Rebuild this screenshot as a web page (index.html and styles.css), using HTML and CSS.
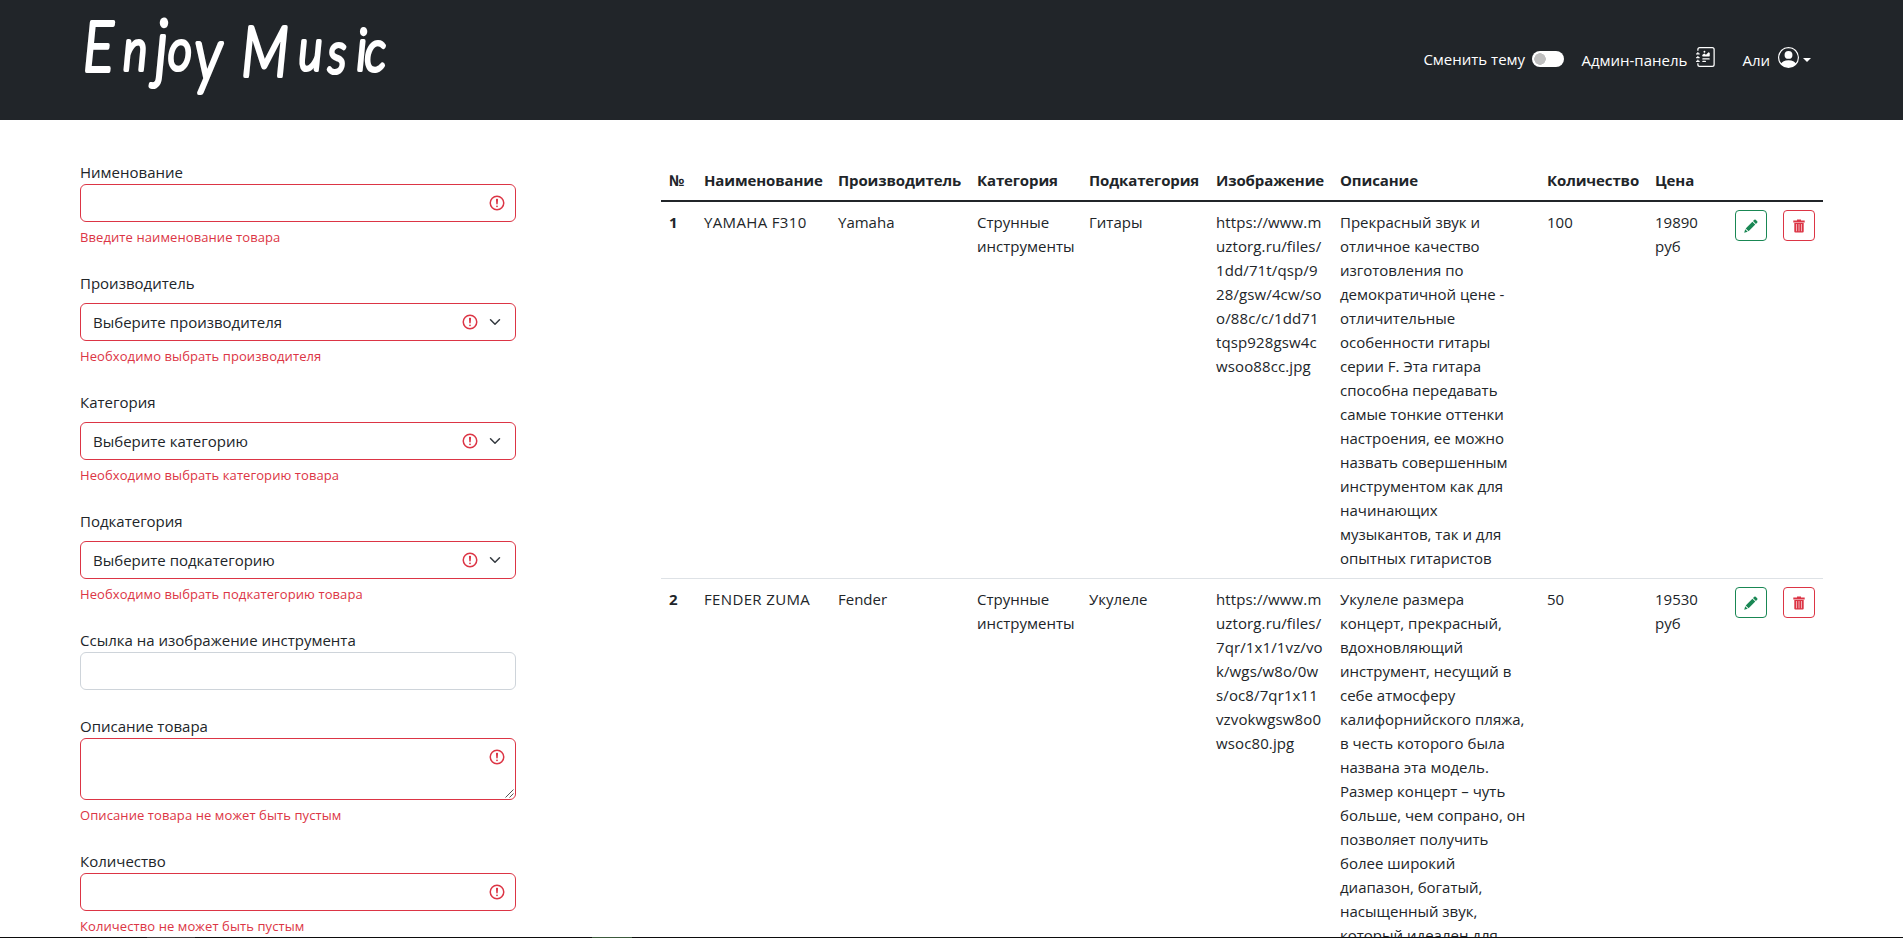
FILE: index.html
```html
<!DOCTYPE html>
<html lang="ru">
<head>
<meta charset="utf-8">
<title>Enjoy Music</title>
<link rel="stylesheet" href="styles.css">
</head>
<body>
<svg class="defs" width="0" height="0" aria-hidden="true">
  <symbol id="warn" viewBox="0 0 12 12"><circle cx="6" cy="6" r="4.5" fill="none" stroke="#dc3545"/><path d="M5.8 3.6h.4L6 6.5z" fill="none" stroke="#dc3545" stroke-linejoin="round"/><circle cx="6" cy="8.2" r=".6" fill="#dc3545"/></symbol>
  <symbol id="chev" viewBox="0 0 16 16"><path d="m2 5 6 6 6-6" fill="none" stroke="#343a40" stroke-width="2" stroke-linecap="round" stroke-linejoin="round"/></symbol>
  <symbol id="pencil" viewBox="0 0 14 14"><path d="M10.300.8a1 1 0 0 1 1.400 0l1.500 1.500a1 1 0 0 1 0 1.400l-1.300 1.300-2.900-2.900zM8.400 2.700l2.900 2.900-6.700 6.700-2.900-2.900zM1.200 10.300l2.500 2.500L.2 13.800z"/></symbol>
  <symbol id="trash" viewBox="0 0 14 14"><path fill-rule="evenodd" d="M5 .5h4v1h3.700v2H1.300v-2H5zM2.300 4h9.400v8.500a1 1 0 0 1-1 1H3.300a1 1 0 0 1-1-1zM4.300 5v7.300h.6V5zm2.400 0v7.300h.6V5zm2.400 0v7.300h.6V5z"/></symbol>
</svg>

<header class="navbar">
  <svg class="logo" width="320" height="110" viewBox="0 0 320 110">
    <text transform="scale(.8 1)"><tspan class="cap" x="4" y="71">E</tspan><tspan x="54" y="70">n</tspan><tspan class="tail" x="94" y="73">j</tspan><tspan x="110" y="70">o</tspan><tspan class="tail" x="143" y="80">y</tspan> <tspan class="cap" x="202" y="76">M</tspan><tspan x="273 310 346 356" y="70 73 70 71">usic</tspan></text>
  </svg>
  <nav class="menu">
    <label class="theme"><span>Сменить тему</span><span class="switch"></span></label>
    <a class="admin"><span>Админ-панель</span>
      <svg width="20" height="20" viewBox="0 0 16 16" fill="#fff"><path d="M7.5 3.75a.75.75 0 1 1-1.5 0 .75.75 0 0 1 1.5 0zm-.861 1.542 1.33.886 1.854-1.855a.25.25 0 0 1 .289-.047L11 4.75V7a.5.5 0 0 1-.5.5h-5A.5.5 0 0 1 5 7v-.5s1.54-1.274 1.639-1.208zM5 9.500a.5.5 0 0 1 .5-.5h5a.5.5 0 0 1 0 1h-5a.5.5 0 0 1-.5-.5zm0 2a.5.5 0 0 1 .5-.5h2a.5.5 0 0 1 0 1h-2a.5.5 0 0 1-.5-.5z"/><path d="M3 0h10a2 2 0 0 1 2 2v12a2 2 0 0 1-2 2H3a2 2 0 0 1-2-2v-1h1v1a1 1 0 0 0 1 1h10a1 1 0 0 0 1-1V2a1 1 0 0 0-1-1H3a1 1 0 0 0-1 1v1H1V2a2 2 0 0 1 2-2z"/><path d="M1 5v-.5a.5.5 0 0 1 1 0V5h.5a.5.5 0 0 1 0 1h-2a.5.5 0 0 1 0-1H1zm0 3v-.5a.5.5 0 0 1 1 0V8h.5a.5.5 0 0 1 0 1h-2a.5.5 0 0 1 0-1H1zm0 3v-.5a.5.5 0 0 1 1 0v.5h.5a.5.5 0 0 1 0 1h-2a.5.5 0 0 1 0-1H1z"/></svg></a>
    <a class="user"><span>Али</span>
      <svg width="21" height="21" viewBox="0 0 16 16" fill="#fff"><path d="M11 6a3 3 0 1 1-6 0 3 3 0 0 1 6 0z"/><path fill-rule="evenodd" d="M0 8a8 8 0 1 1 16 0A8 8 0 0 1 0 8zm8-7a7 7 0 0 0-5.468 11.370C3.242 11.226 4.805 10 8 10s4.757 1.225 5.468 2.370A7 7 0 0 0 8 1z"/></svg><i class="caret"></i></a>
  </nav>
</header>

<main class="page">
  <form class="form">
    <div class="field"><label>Нименование</label><div class="control bad"><svg class="ic"><use href="#warn"/></svg></div><p class="error">Введите наименование товара</p></div>
    <div class="field spaced"><label>Производитель</label><div class="control bad select"><span>Выберите производителя</span><svg class="ic"><use href="#warn"/></svg><svg class="ch"><use href="#chev"/></svg></div><p class="error">Необходимо выбрать производителя</p></div>
    <div class="field spaced"><label>Категория</label><div class="control bad select"><span>Выберите категорию</span><svg class="ic"><use href="#warn"/></svg><svg class="ch"><use href="#chev"/></svg></div><p class="error">Необходимо выбрать категорию товара</p></div>
    <div class="field spaced"><label>Подкатегория</label><div class="control bad select"><span>Выберите подкатегорию</span><svg class="ic"><use href="#warn"/></svg><svg class="ch"><use href="#chev"/></svg></div><p class="error">Необходимо выбрать подкатегорию товара</p></div>
    <div class="field"><label>Ссылка на изображение инструмента</label><div class="control"></div></div>
    <div class="field"><label>Описание товара</label><div class="control bad area"><svg class="ic"><use href="#warn"/></svg><svg class="grip" viewBox="0 0 9 9"><path d="M.5 8.500l8-8M4.500 8.500l4-4" stroke="#555" fill="none"/></svg></div><p class="error">Описание товара не может быть пустым</p></div>
    <div class="field"><label>Количество</label><div class="control bad"><svg class="ic"><use href="#warn"/></svg></div><p class="error">Количество не может быть пустым</p></div>
  </form>

  <table class="goods">
    <colgroup><col class="c1"><col class="c2"><col class="c3"><col class="c4"><col class="c5"><col class="c6"><col class="c7"><col class="c8"><col class="c9"><col class="c10"><col class="c10"></colgroup>
    <thead><tr><th>№</th><th>Наименование</th><th>Производитель</th><th>Категория</th><th>Подкатегория</th><th>Изображение</th><th>Описание</th><th>Количество</th><th>Цена</th><th></th><th></th></tr></thead>
    <tbody>
      <tr><th>1</th><td class="name">YAMAHA F310</td><td>Yamaha</td><td>Струнные<br>инструменты</td><td>Гитары</td>
        <td class="url">https://www.m<br>uztorg.ru/files/<br>1dd/71t/qsp/9<br>28/gsw/4cw/so<br>o/88c/c/1dd71<br>tqsp928gsw4c<br>wsoo88cc.jpg</td>
        <td>Прекрасный звук и<br>отличное качество<br>изготовления по<br>демократичной цене -<br>отличительные<br>особенности гитары<br>серии F. Эта гитара<br>способна передавать<br>самые тонкие оттенки<br>настроения, ее можно<br>назвать совершенным<br>инструментом как для<br>начинающих<br>музыкантов, так и для<br>опытных гитаристов</td>
        <td>100</td><td>19890<br>руб</td><td><button class="btn edit"><svg><use href="#pencil"/></svg></button></td><td><button class="btn del"><svg><use href="#trash"/></svg></button></td></tr>
      <tr><th>2</th><td class="name">FENDER ZUMA</td><td>Fender</td><td>Струнные<br>инструменты</td><td>Укулеле</td>
        <td class="url">https://www.m<br>uztorg.ru/files/<br>7qr/1x1/1vz/vo<br>k/wgs/w8o/0w<br>s/oc8/7qr1x11<br>vzvokwgsw8o0<br>wsoc80.jpg</td>
        <td>Укулеле размера<br>концерт, прекрасный,<br>вдохновляющий<br>инструмент, несущий в<br>себе атмосферу<br>калифорнийского пляжа,<br>в честь которого была<br>названа эта модель.<br>Размер концерт – чуть<br>больше, чем сопрано, он<br>позволяет получить<br>более широкий<br>диапазон, богатый,<br>насыщенный звук,<br>который идеален для</td>
        <td>50</td><td>19530<br>руб</td><td><button class="btn edit"><svg><use href="#pencil"/></svg></button></td><td><button class="btn del"><svg><use href="#trash"/></svg></button></td></tr>
    </tbody>
  </table>
</main>
<div class="edge"></div>
</body>
</html>
```
FILE: styles.css
```css
* { box-sizing: border-box; }
html, body { height: 938px; overflow: hidden; }
body { margin: 0; background: #fff; color: #212529; font: 15px/24px "Open Sans", "Noto Sans", sans-serif; }
.defs { display: block; position: absolute; }
.navbar { height: 120px; background: #212529; color: #fff; padding: 0 92px 0 80px; display: flex; justify-content: space-between; align-items: flex-start; }
.logo { overflow: visible; }
.logo text { font: italic 300 58px Lato, sans-serif; fill: #fff; stroke: #fff; stroke-width: 4.2px; stroke-linejoin: round; }
.logo .cap { font-size: 70px; }
.logo .tail { font-size: 74px; }
.menu { display: flex; padding-top: 46px; height: 80px; white-space: nowrap; }
.menu > * { display: flex; align-items: flex-start; }
.menu span:first-child { padding-top: 1px; }
.theme { width: 158px; justify-content: space-between; padding-right: 17px; }
.switch { width: 32px; height: 16px; margin-top: 5px; border-radius: 8px; background: radial-gradient(circle at 8px 8px, #bfbfbf 5.5px, #fff 6px); }
.admin { width: 161px; gap: 9px; padding-top: 1px; }
.user { gap: 8px; padding-top: 1px; }
.caret { width: 0; border: 4px solid transparent; border-top-color: #fff; border-bottom: 0; margin: 11px 0 0 -4px; }

.page { display: flex; gap: 145px; padding: 40px 80px 0; height: 817px; overflow: hidden; }
.form { width: 436px; flex: none; display: flex; flex-direction: column; gap: 24px; }
.field label { display: block; height: 24px; }
.spaced label { margin-bottom: 8px; }
.control { height: 38px; border: 1px solid #ced4da; border-radius: 6px; padding: 0 9px 0 12px; display: flex; align-items: center; justify-content: flex-end; gap: 8px; }
.control span { margin-right: auto; }
.bad { border-color: #dc3545; }
.select { padding-right: 12px; }
.ic { width: 18px; height: 18px; }
.ch { width: 16px; height: 12px; }
.area { height: 62px; align-items: flex-start; padding-top: 9px; position: relative; }
.grip { position: absolute; right: 1px; bottom: 1px; width: 9px; height: 9px; }
.error { margin: 4px 0 0; padding-top: 1px; height: 21px; font-size: 13px; line-height: 21px; letter-spacing: .09px; color: #dc3545; }

.goods { table-layout: fixed; border-collapse: separate; border-spacing: 0; width: 1162px; flex: none; align-self: flex-start; white-space: nowrap; }
.c1 { width: 35px; } .c2 { width: 134px; } .c3 { width: 139px; } .c4 { width: 112px; } .c5 { width: 127px; }
.c6 { width: 124px; } .c7 { width: 207px; } .c8 { width: 108px; } .c9 { width: 80px; } .c10 { width: 48px; }
.goods th, .goods td { padding: 8px; text-align: left; vertical-align: top; border-bottom: 1px solid #dee2e6; }
.goods thead th { border-bottom: 2px solid #212529; }
.goods th { font-weight: 700; letter-spacing: -.12px; }
.goods .name { letter-spacing: .35px; }
.goods .url { letter-spacing: .12px; }
.btn { display: flex; align-items: center; justify-content: center; width: 32px; height: 31px; padding: 0; background: none; border: 1px solid; border-radius: 4px; }
.btn svg { width: 14px; height: 14px; fill: currentColor; }
.edit { color: #198754; }
.del { color: #dc3545; }
.edge { height: 1px; background: linear-gradient(90deg, #0c0c0c 147px, #3a3a3a 147px 195px, #0c0c0c 195px 592px, #3c5a3c 592px 632px, #0c0c0c 632px); }
```
